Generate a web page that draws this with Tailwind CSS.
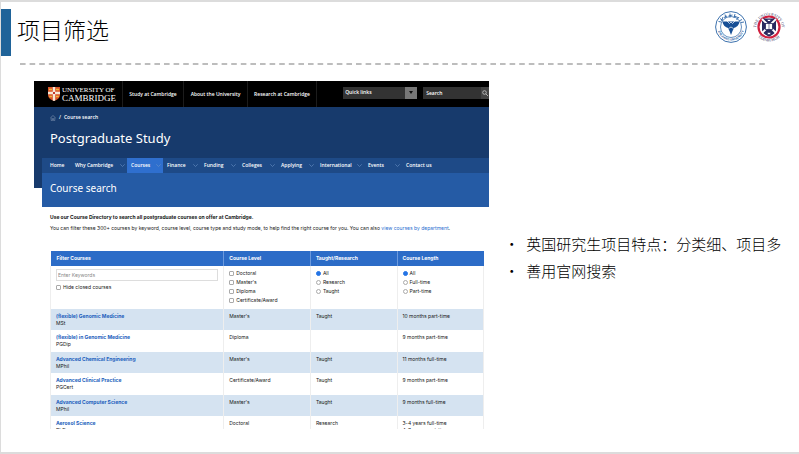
<!DOCTYPE html>
<html lang="zh-CN">
<head>
  <meta charset="UTF-8">
  <meta name="viewport" content="width=device-width, initial-scale=1.0">
  <title>项目筛选</title>
  <script src="https://cdn.jsdelivr.net/npm/@tailwindcss/browser@4"></script>
</head>
<body class="bg-white">
  <div class="min-h-screen flex flex-col bg-white border-t-2 border-l border-b-2 border-[#dcdcdc] font-['Noto_Sans_CJK_SC',sans-serif] text-black overflow-hidden">
    <!-- Title -->
    <header class="flex items-start justify-between pt-[7px] pr-[11px]">
      <div class="flex items-center gap-[6px]">
        <div class="w-[10px] h-[47px] bg-[#1f6399]"></div>
        <h1 class="text-[23px] leading-[32px] pb-[8px] font-light">项目筛选</h1>
      </div>
      <div class="flex gap-[2px] pt-[1px]">
        <svg class="w-[34px] h-[34px]" viewBox="0 0 34 34" role="img" aria-label="Zhejiang University">
          <circle cx="17" cy="17" r="15.4" fill="#fff" stroke="#3d72ae" stroke-width="1"/>
          <circle cx="17" cy="17" r="10.500" fill="none" stroke="#3d72ae" stroke-width=".8"/>
          <path d="M8.500 11.500h17c-.5 4-3 5.500-5.500 6.500l-1.500 3L17 25l-1.500-4-1.500-3c-2.500-1-5-2.500-5.500-6.500z" fill="#174f96"/>
          <path d="M13 11l2.500 2.500L17 12l1.500 1.500L21 11M14.500 18.500l2.500-1.500 2.500 1.500" fill="none" stroke="#fff" stroke-width=".7"/>
          <path d="M4.500 11.500l3 .5M6 8.500l3 2M9 7l-1.500 4M11 4.500l1 3.500M10 7.500l3-1.500M16 3.500v4M14.500 6l4-1M21 4l-1 4M20 6l4 1.500M25 7l-2.500 3M28 9.500l-3 1.500M27 12.500l3-.5" fill="none" stroke="#2a63a5" stroke-width=".9"/>
          <path id="zju" d="M3.500 17a13.500 13.500 0 0 0 27 0" fill="none"/>
          <text class="font-['Liberation_Sans',sans-serif] font-bold text-[3px]" fill="#2a63a5"><textPath href="#zju" startOffset="50%" text-anchor="middle">ZHEJIANG UNIVERSITY</textPath></text>
        </svg>
        <svg class="w-[38px] h-[34px]" viewBox="0 0 38 34" role="img" aria-label="The University of Edinburgh">
          <path id="uoeTop" d="M7 23.500a13 13 0 1 1 24 0" fill="none"/>
          <path id="uoeBottom" d="M6 24a15 15 0 0 0 26 0" fill="none"/>
          <text class="font-['Liberation_Serif',serif] text-[4px]" fill="#33355f"><textPath href="#uoeTop" startOffset="50%" text-anchor="middle">THE UNIVERSITY OF</textPath></text>
          <text class="font-['Liberation_Serif',serif] text-[4px]" fill="#33355f"><textPath href="#uoeBottom" startOffset="50%" text-anchor="middle">EDINBURGH</textPath></text>
          <circle cx="19" cy="17" r="10.500" fill="#fff" stroke="#d0203f" stroke-width="2.200"/>
          <path d="M12 8.500h14v11c0 3.500-3.500 5.500-7 7-3.500-1.500-7-3.500-7-7z" fill="#29295f"/>
          <path d="M12 9l14 14M26 9L12 23" stroke="#fff" stroke-width="1.800"/>
          <rect x="15.500" y="13.500" width="7" height="6" fill="#fff" stroke="#29295f" stroke-width=".8"/>
          <path d="M19 13.500v6M17.500 11v-1.500h3V11M17.500 22.500h3v2h-3z" stroke="#29295f" stroke-width=".6" fill="#fff"/>
        </svg>
      </div>
    </header>

    <div class="pl-[19px] pr-[33px] pt-[7px]">
      <svg class="block w-full h-[2px]" aria-hidden="true">
        <line x1="0" y1="1" x2="100%" y2="1" stroke="#a8a8a8" stroke-width="1.500" stroke-dasharray="5.600 4"/>
      </svg>
    </div>

    <main class="flex items-start pt-[16px] pl-[33px]">
      <!-- Course search page -->
      <section class="w-[59.5%] h-[348px] shrink-0 overflow-hidden text-[5px] leading-[7px] font-['Inter',sans-serif] text-[#171717]">
        <div class="bg-black text-white h-[26px] flex items-center font-['Open_Sans',sans-serif] font-semibold whitespace-nowrap">
          <a href="#" class="flex items-center gap-[2px] pl-[14px] w-[89px] h-full border-r border-[#1c1c1c] font-['Liberation_Serif',serif] font-normal">
            <svg class="w-[12px] h-[14px] shrink-0" viewBox="0 0 12 14" aria-hidden="true">
              <path d="M0 0h12v8c0 3-3 5-6 6-3-1-6-3-6-6z" fill="#d9532b"/>
              <path d="M4.800 0h2.400v4.800H12v2.400H7.200v6.300L6 14l-1.200-.5V7.200H0V4.800h4.800z" fill="#f5e9d8"/>
              <path d="M1 2.400h3M8 2.400h3M1.200 9.500h2.800M8 9.500h2.800" stroke="#f3b73b" stroke-width="1.500"/>
              <path d="M5 5h2v2H5z" fill="#c4352b"/>
            </svg>
            <span class="leading-[8px]"><span class="block text-[7px]">UNIVERSITY OF</span><span class="block text-[9px]">CAMBRIDGE</span></span>
          </a>
          <a href="#" class="w-[61px] h-full flex items-center justify-center border-r border-[#1c1c1c]">Study at Cambridge</a>
          <a href="#" class="w-[64px] h-full flex items-center justify-center border-r border-[#1c1c1c]">About the University</a>
          <a href="#" class="w-[69px] h-full flex items-center justify-center border-r border-[#1c1c1c]">Research at Cambridge</a>
          <div class="ml-auto flex gap-[6px] mb-[3px]">
            <button class="w-[74px] h-[12px] bg-[#333] flex items-center justify-between pl-[2px]">Quick links
              <span class="w-[12px] h-[12px] bg-[#777] flex items-center justify-center">
                <svg class="w-[4px] h-[3px]" viewBox="0 0 4 3" aria-hidden="true"><path d="M0 0h4L2 3z" fill="#111"/></svg>
              </span>
            </button>
            <div class="w-[66px] h-[12px] bg-[#333] flex items-center pl-[3px]">
              <input type="text" aria-label="Search" placeholder="Search" class="w-[55px] h-full placeholder:text-white">
              <button aria-label="Go" class="w-[8px] h-full bg-[#444] flex items-center justify-center">
                <svg class="w-[6px] h-[6px]" viewBox="0 0 6 6" fill="none" stroke="#ccc" stroke-width=".8" aria-hidden="true"><circle cx="2.500" cy="2.500" r="1.800"/><path d="M4 4l2 2"/></svg>
              </button>
            </div>
          </div>
        </div>

        <div class="text-white font-['Open_Sans',sans-serif]">
          <div class="h-[51px] pl-[16px] pt-[7px] bg-[#173a6c]">
            <div class="flex items-center gap-[3px] font-semibold">
              <svg class="w-[6px] h-[6px]" viewBox="0 0 6 6" fill="none" stroke="#7186a6" stroke-width=".7" aria-hidden="true"><path d="M.3 3L3 .5 5.700 3M1.200 2.500v3h1.300V3.500h1v2h1.300v-3"/></svg>
              <span>/</span><a href="#">Course search</a>
            </div>
            <h2 class="text-[13px] leading-[18px] pt-[8px] font-['Noto_Sans',sans-serif]">Postgraduate Study</h2>
          </div>
          <div class="flex items-start">
            <div class="w-[8px] h-[30px] shrink-0 bg-[#173a6c]"></div>
            <div class="grow min-w-0 bg-[#255ba5]">
              <nav class="h-[15px] bg-[#1e4a87] grid grid-cols-[29px_56px_36px_37px_38px_39px_39px_48px_38px_36px] font-semibold whitespace-nowrap" id="siteNav"></nav>
              <h3 class="h-[34px] pl-[8px] flex items-center pb-[3px] text-[10px] font-['Noto_Sans',sans-serif]">Course search</h3>
            </div>
          </div>
        </div>

        <div class="pl-[16px] pr-[5px] pt-[7px]">
          <p class="font-bold whitespace-nowrap">Use our Course Directory to search all postgraduate courses on offer at Cambridge.</p>
          <p class="pt-[4px] whitespace-nowrap">You can filter these 300+ courses by keyword, course level, course type and study mode, to help find the right course for you. You can also <a href="#" class="text-[#2a6fd0]">view courses by department</a>.</p>
          <table class="w-full table-fixed mt-[19px] text-left">
            <thead>
              <tr class="h-[15px] bg-[#2c6cc7] text-white">
                <th class="w-[40%] px-[6px]">Filter Courses</th>
                <th class="w-[20%] px-[5px] border-l border-[#6c9add]">Course Level</th>
                <th class="w-[20%] px-[5px] border-l border-[#6c9add]">Taught/Research</th>
                <th class="w-[20%] px-[5px] border-l border-[#6c9add]">Course Length</th>
              </tr>
            </thead>
            <tbody id="courseTable">
              <tr class="h-[43px] align-top">
                <td class="px-[5px] pt-[3px] border-l border-[#eee]">
                  <input type="text" aria-label="Enter Keywords" placeholder="Enter Keywords" class="block w-full h-[12px] border border-[#ddd] px-px placeholder:text-[#888]">
                  <label class="flex items-center gap-[2px] pt-[3px]"><input type="checkbox" class="appearance-none w-[5px] h-[5px] border border-[#aaa] rounded-[1px]">Hide closed courses</label>
                </td>
                <td class="px-[5px] pt-[3px] border-l border-[#eee]" id="levels"></td>
                <td class="px-[5px] pt-[3px] border-l border-[#eee]" id="types"></td>
                <td class="px-[5px] pt-[3px] border-x border-[#eee]" id="lengths"></td>
              </tr>
            </tbody>
          </table>
        </div>
      </section>

      <ul class="pt-[149px] pl-[15px] text-[15px] leading-[27px] font-light whitespace-nowrap">
        <li class="flex"><span class="w-[22px]">•</span>英国研究生项目特点：分类细、项目多</li>
        <li class="flex"><span class="w-[22px]">•</span>善用官网搜索</li>
      </ul>
    </main>
  </div>

  <script>
    const chevron = '<svg class="w-[5px] h-[3px]" viewBox="0 0 5 3" fill="none" stroke="#6d94c8" stroke-width=".6"><path d="M.3.3l2.200 2.200L4.700.3"/></svg>';
    const nav = ['Home', 'Why Cambridge', 'Courses', 'Finance', 'Funding', 'Colleges', 'Applying', 'International', 'Events', 'Contact us'];
    document.getElementById('siteNav').innerHTML = nav.map((item, i) => {
      const edge = i === 0 || i === nav.length - 1;
      return `<a href="#" class="flex items-center justify-between pr-[2px] ${i === 0 ? 'pl-[8px]' : 'pl-[4px]'} ${item === 'Courses' ? 'bg-[#2f6fce]' : ''}">${item}${edge ? '' : chevron}</a>`;
    }).join('');

    function options(id, type, names) {
      const shape = type === 'radio' ? 'rounded-full checked:border-[#2474e5] checked:bg-[#2474e5]' : 'rounded-[1px]';
      document.getElementById(id).innerHTML = names.map((name, i) => `
        <label class="flex items-center gap-[2px] h-[9px]"><input type="${type}" name="${id}" ${type === 'radio' && i === 0 ? 'checked' : ''} class="appearance-none w-[5px] h-[5px] border border-[#aaa] ${shape}">${name}</label>`).join('');
    }
    options('levels', 'checkbox', ['Doctoral', "Master's", 'Diploma', 'Certificate/Award']);
    options('types', 'radio', ['All', 'Research', 'Taught']);
    options('lengths', 'radio', ['All', 'Full-time', 'Part-time']);

    const courses = [
      ['(flexible) Genomic Medicine', 'MSt', "Master's", 'Taught', '10 months part-time'],
      ['(flexible) in Genomic Medicine', 'PGDip', 'Diploma', '', '9 months part-time'],
      ['Advanced Chemical Engineering', 'MPhil', "Master's", 'Taught', '11 months full-time'],
      ['Advanced Clinical Practice', 'PGCert', 'Certificate/Award', 'Taught', '9 months part-time'],
      ['Advanced Computer Science', 'MPhil', "Master's", 'Taught', '9 months full-time'],
      ['Aerosol Science', 'PhD', 'Doctoral', 'Research', '3-4 years full-time<br>4-7 years part-time']
    ];
    document.getElementById('courseTable').insertAdjacentHTML('beforeend', courses.map((c, i) => `
      <tr class="align-top ${i % 2 ? 'h-[22px]' : 'h-[21px] bg-[#d5e3f1]'}">
        <td class="px-[5px] pt-[4px] border-l border-[#eee]"><a href="#" class="font-bold text-[#1d5fbd]">${c[0]}</a><br>${c[1]}</td>
        <td class="px-[5px] pt-[4px] border-l border-[#eee]">${c[2]}</td>
        <td class="px-[5px] pt-[4px] border-l border-[#eee]">${c[3]}</td>
        <td class="px-[5px] pt-[4px] border-x border-[#eee]">${c[4]}</td>
      </tr>`).join(''));
  </script>
</body>
</html>
